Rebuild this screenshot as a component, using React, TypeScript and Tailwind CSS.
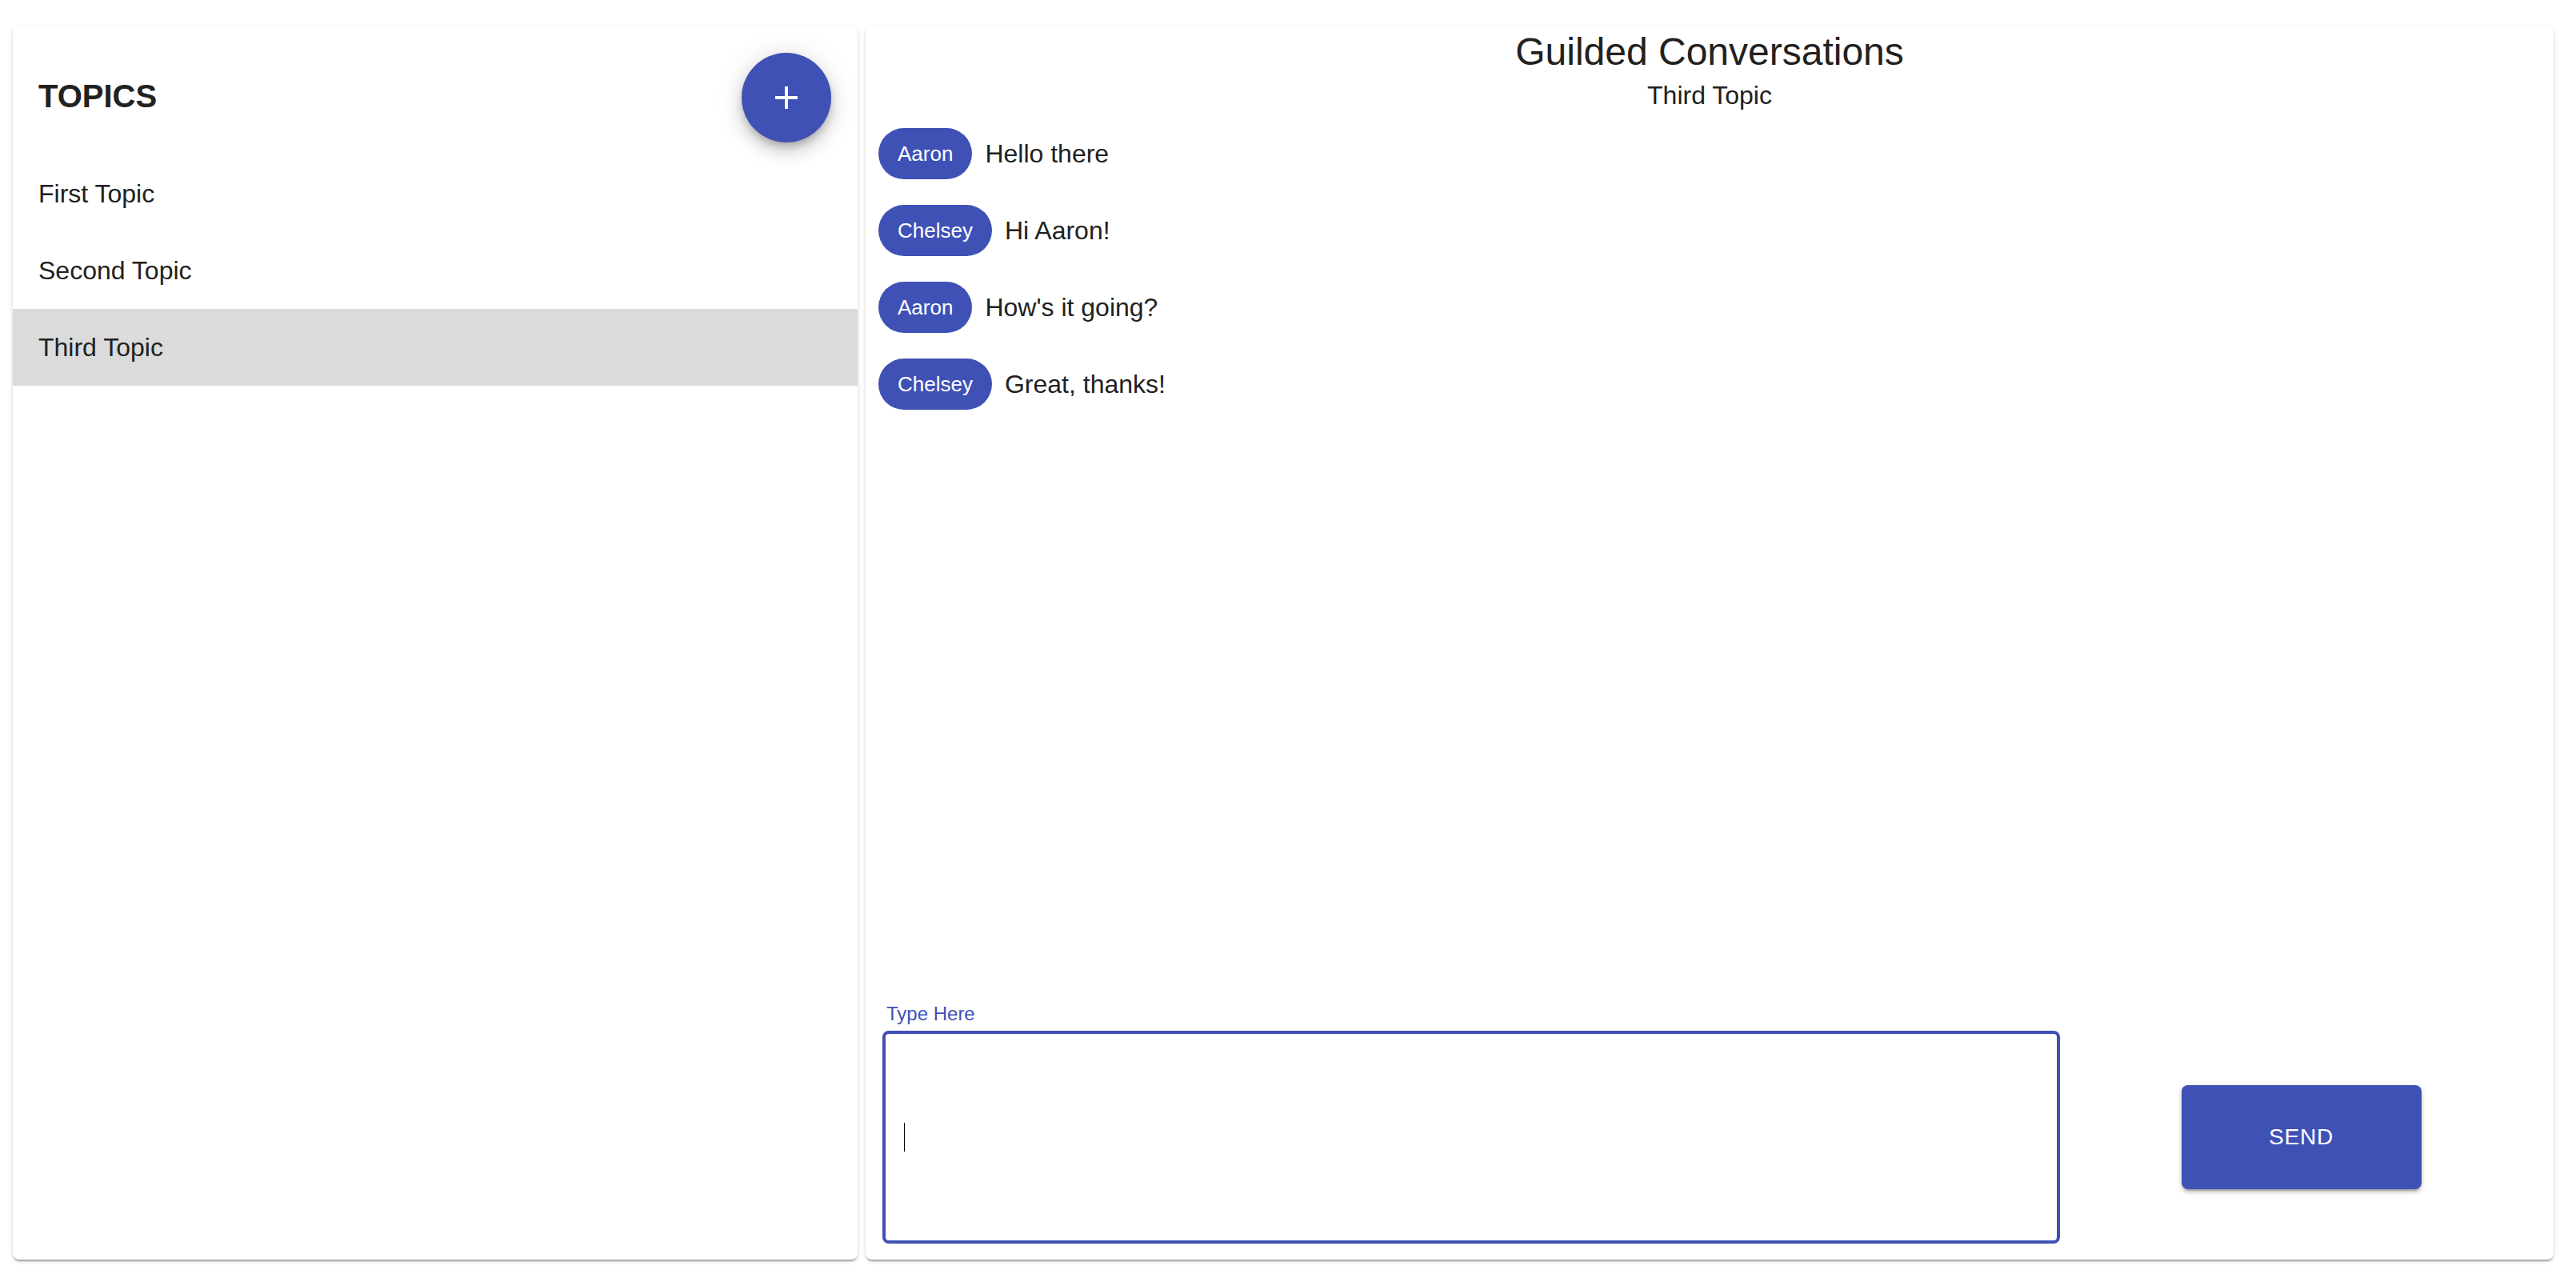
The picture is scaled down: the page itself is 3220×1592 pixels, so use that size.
const topics = ["First Topic", "Second Topic", "Third Topic"];

const messages = [
  { from: "Aaron", text: "Hello there" },
  { from: "Chelsey", text: "Hi Aaron!" },
  { from: "Aaron", text: "How's it going?" },
  { from: "Chelsey", text: "Great, thanks!" },
];

const paperShadow =
  "shadow-[0px_4px_2px_-2px_rgba(0,0,0,0.2),0px_2px_2px_0px_rgba(0,0,0,0.14),0px_2px_6px_0px_rgba(0,0,0,0.12)]";

export default function App() {
  const selected = "Third Topic";

  return (
    <div className="w-[3220px] h-[1592px] bg-white flex gap-[10px] pt-[33px] pl-[16px] pr-[28px] pb-[18px] font-['Liberation_Sans',Arial,sans-serif] text-[#212121]">
      {/* ─── Topics ─── */}
      <aside className={`w-[1056px] shrink-0 bg-white rounded-[8px] flex flex-col ${paperShadow}`}>
        <div className="flex items-center justify-between pl-[32px] pr-[33px] pt-[33px] pb-[16px]">
          <h2 className="text-[40px] leading-[48px] font-bold mb-[4px]">TOPICS</h2>
          <button className="w-[112px] h-[112px] rounded-full bg-[#3f51b5] flex items-center justify-center shadow-[0px_6px_10px_-2px_rgba(0,0,0,0.2),0px_12px_20px_0px_rgba(0,0,0,0.14),0px_2px_36px_0px_rgba(0,0,0,0.12)]">
            <svg width="48" height="48" viewBox="0 0 24 24" fill="white">
              <path d="M19 13h-6v6h-2v-6H5v-2h6V5h2v6h6v2z" />
            </svg>
          </button>
        </div>
        <ul>
          {topics.map((t) => (
            <li
              key={t}
              className={`h-[96px] flex items-center px-[32px] text-[32px] leading-[48px] ${
                t === selected ? "bg-[#dbdbdb]" : ""
              }`}
            >
              {t}
            </li>
          ))}
        </ul>
      </aside>

      {/* ─── Conversation ─── */}
      <main className={`flex-1 bg-white rounded-[8px] flex flex-col ${paperShadow}`}>
        <h1 className="text-center text-[48px] leading-[64px]">Guilded Conversations</h1>
        <h2 className="text-center text-[32px] leading-[44px]">{selected}</h2>

        <div className="flex-1 flex flex-col gap-[32px] pl-[16px] pt-[19px]">
          {messages.map((m, i) => (
            <div key={i} className="flex items-center">
              <span className="h-[64px] px-[24px] rounded-full bg-[#3f51b5] text-white text-[26px] flex items-center">
                {m.from}
              </span>
              <span className="ml-[16px] text-[32px] leading-[48px]">{m.text}</span>
            </div>
          ))}
        </div>

        <div className="flex items-end pl-[21px] pb-[20px]">
          <div className="w-[1472px] flex flex-col">
            <label className="text-[24px] leading-[24px] text-[#3f51b5] pl-[5px] mb-[9px]">Type Here</label>
            <div className="h-[266px] border-[4px] border-[#3f51b5] rounded-[8px] flex items-center pl-[23px]">
              <span className="w-[1px] h-[36px] bg-black" />
            </div>
          </div>
          <div className="flex-1 h-[266px] flex items-center justify-center pr-[14px]">
            <button className="w-[300px] h-[130px] rounded-[8px] bg-[#3f51b5] text-white text-[28px] tracking-[0.8px] shadow-[0px_6px_2px_-4px_rgba(0,0,0,0.2),0px_4px_4px_0px_rgba(0,0,0,0.14),0px_2px_10px_0px_rgba(0,0,0,0.12)]">
              SEND
            </button>
          </div>
        </div>
      </main>
    </div>
  );
}
